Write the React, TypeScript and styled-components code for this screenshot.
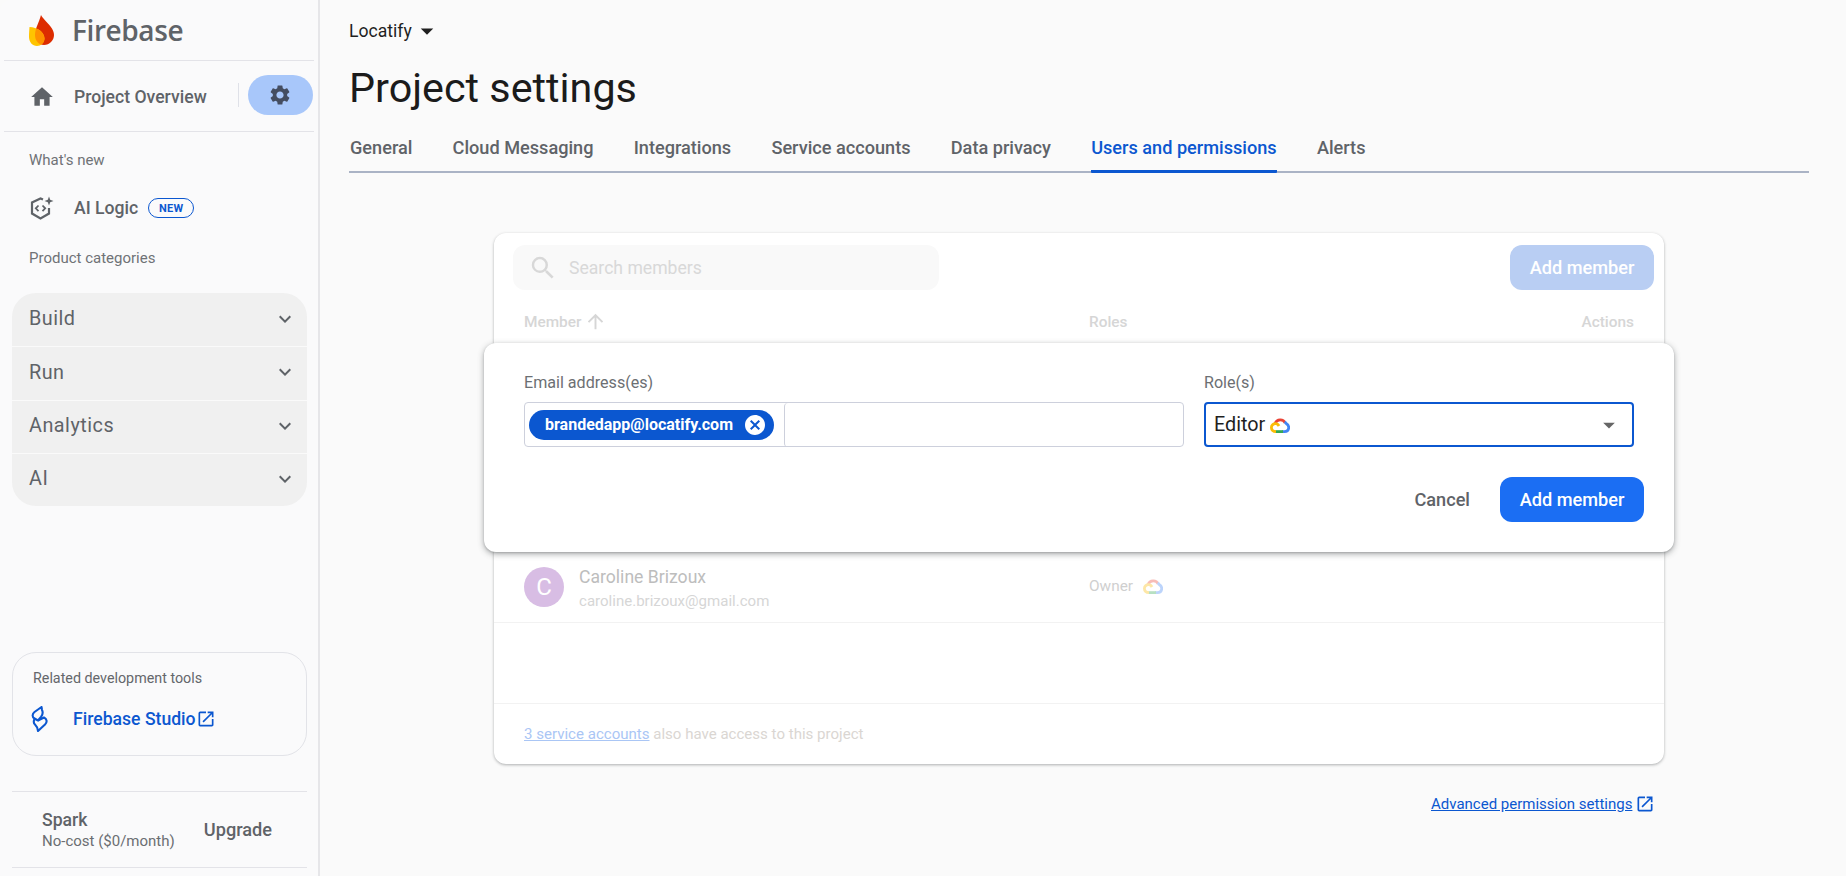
import React from "react";
import styled, { createGlobalStyle } from "styled-components";
import {
  MdHome,
  MdSettings,
  MdExpandMore,
  MdOpenInNew,
  MdSearch,
  MdArrowUpward,
  MdArrowDropDown,
  MdCancel,
} from "react-icons/md";

const GlobalStyle = createGlobalStyle`
  html, body {
    margin: 0;
    height: 100%;
    overflow: hidden;
    background: #fafafa;
    font-family: Roboto, "Liberation Sans", sans-serif;
  }
  * { box-sizing: border-box; }
`;

const Page = styled.div`
  display: flex;
  width: 1846px;
  height: 876px;
  overflow: hidden;
`;

const Sidebar = styled.aside`
  width: 320px;
  flex: none;
  height: 876px;
  display: flex;
  flex-direction: column;
  background: #fafafb;
  border-right: 2px solid #e6e6e9;
  border-top-left-radius: 12px;
  color: #5f6368;
`;

const BrandRow = styled.div`
  height: 61px;
  margin: 0 4px;
  padding-left: 25px;
  display: flex;
  align-items: center;
  gap: 18px;
  border-bottom: 1px solid #e3e3e8;
`;

const BrandName = styled.span`
  font-family: "Open Sans", Roboto, sans-serif;
  font-size: 28px;
  letter-spacing: -0.4px;
  color: #5f6368;
  font-weight: 600;
`;

const OverviewRow = styled.div`
  height: 71px;
  margin: 0 4px;
  padding: 0 0 2px 25px;
  display: flex;
  align-items: center;
  border-bottom: 1px solid #e3e3e8;
`;

const OverviewLink = styled.div`
  display: flex;
  align-items: center;
  padding-top: 3px;
`;

const NavLabel = styled.span`
  font-size: 17.6px;
  font-weight: 500;
  color: #5f6368;
`;

const IconSlot = styled.span`
  width: 45px;
  flex: none;
  display: flex;
  align-items: center;
  font-size: 26px;
  color: #5f6368;
`;

const VerticalRule = styled.span`
  width: 1px;
  height: 24px;
  background: #dfe1e8;
  margin-left: 31px;
`;

const GearPill = styled.span`
  width: 65px;
  height: 40px;
  margin-left: 9px;
  border-radius: 20px;
  background: #a8c7fa;
  color: #444d60;
  display: flex;
  align-items: center;
  justify-content: center;
  font-size: 24px;
`;

const SectionLabel = styled.div<{ $top: number }>`
  font-size: 15px;
  line-height: 18px;
  color: #6f7276;
  padding-left: 29px;
  margin-top: ${(p) => p.$top}px;
`;

const LogicRow = styled.div`
  height: 26px;
  margin-top: 26px;
  padding-left: 29px;
  display: flex;
  align-items: center;
`;

const NewBadge = styled.span`
  margin-left: 10px;
  width: 46px;
  height: 20px;
  border: 1.5px solid #0b57d0;
  border-radius: 10px;
  color: #0b57d0;
  font-size: 11px;
  font-weight: 700;
  letter-spacing: 0.3px;
  display: flex;
  align-items: center;
  justify-content: center;
`;

const Accordion = styled.div`
  margin: 26px 11px 0 12px;
  border-radius: 24px;
  overflow: hidden;
  background: #f0f0f0;
`;

const AccordionRow = styled.div`
  height: 53.25px;
  padding: 0 10px 2px 17px;
  display: flex;
  align-items: center;
  justify-content: space-between;
  font-size: 19.8px;
  letter-spacing: 0.5px;
  color: #5f6368;
  & + & {
    border-top: 1px solid #fafafa;
  }
  svg {
    font-size: 24px;
  }
`;

const Spacer = styled.div`
  flex: 1;
`;

const ToolsCard = styled.div`
  margin: 0 11px 0 12px;
  height: 104px;
  border: 1px solid #e2e3e8;
  border-radius: 24px;
  padding: 16px 0 0 20px;
`;

const ToolsTitle = styled.div`
  font-size: 14.3px;
  line-height: 18px;
  color: #64676b;
`;

const StudioRow = styled.div`
  display: flex;
  align-items: center;
  margin-top: 19px;
  margin-left: -2px;
  color: #0b57d0;
`;

const StudioName = styled.span`
  font-size: 17.6px;
  font-weight: 500;
  margin-left: 24px;
`;

const PlanRow = styled.div`
  margin: 35px 11px 8px 12px;
  height: 77px;
  border-top: 1px solid #e3e3e8;
  border-bottom: 1px solid #e3e3e8;
  padding-left: 30px;
  display: flex;
  align-items: center;
  justify-content: space-between;
  padding-right: 35px;
`;

const PlanName = styled.div`
  font-size: 17.6px;
  line-height: 22px;
  font-weight: 500;
  color: #5f6368;
`;

const PlanCost = styled.div`
  font-size: 15px;
  line-height: 20px;
  color: #6b6e72;
`;

const UpgradeLabel = styled.span`
  font-size: 18.15px;
  font-weight: 500;
  color: #5f6368;
`;

const Main = styled.main`
  flex: 1;
  padding: 0 37px 0 29px;
  background: #fafafa;
  display: flex;
  flex-direction: column;
`;

const ProjectPicker = styled.div`
  margin-top: 20px;
  height: 22px;
  display: flex;
  align-items: center;
  font-size: 17.6px;
  color: #1f1f1f;
  svg {
    font-size: 30px;
  }
`;

const Title = styled.h1`
  margin: 20px 0 0;
  font-family: Roboto, sans-serif;
  font-size: 41.3px;
  line-height: 52px;
  font-weight: 400;
  color: #1b1b1b;
`;

const Tabs = styled.nav`
  margin-top: 22px;
  height: 37px;
  display: flex;
  gap: 40.2px;
  padding-left: 1px;
  border-bottom: 2px solid #aab3c5;
`;

const Tab = styled.div<{ $active?: boolean }>`
  height: 37px;
  font-size: 18.15px;
  line-height: 24px;
  font-weight: 500;
  color: ${(p) => (p.$active ? "#0b57d0" : "#5f6368")};
  border-bottom: ${(p) => (p.$active ? "3px solid #0b57d0" : "none")};
  border-radius: 1px;
`;

const Card = styled.section`
  position: relative;
  align-self: flex-start;
  margin: 60px 0 0 145px;
  width: 1170px;
  height: 531px;
  background: #fff;
  border-radius: 12px;
  box-shadow: 0 1px 3px rgba(60, 64, 67, 0.4);
`;

const Toolbar = styled.div`
  display: flex;
  justify-content: space-between;
  padding: 12px 10px 0 19px;
`;

const SearchBox = styled.div`
  width: 426px;
  height: 45px;
  border-radius: 12px;
  background: #f9f9f9;
  padding-left: 15px;
  display: flex;
  align-items: center;
  gap: 11px;
  color: #d8d8d8;
  font-size: 17.6px;
  font-weight: 400;
  svg {
    font-size: 30px;
  }
`;

const PrimaryButton = styled.div<{ $muted?: boolean }>`
  width: 144px;
  height: 45px;
  border-radius: 12px;
  background: ${(p) => (p.$muted ? "#b9cef3" : "#1b6ef3")};
  color: #fff;
  font-size: 18.15px;
  font-weight: 500;
  display: flex;
  align-items: center;
  justify-content: center;
`;

const MemberGrid = styled.div`
  display: grid;
  grid-template-columns: 565px 1fr auto;
  padding: 0 30px 0 30px;
  align-items: center;
`;

const HeadRow = styled(MemberGrid)`
  height: 45px;
  margin-top: 9px;
  font-size: 15.4px;
  font-weight: 500;
  color: #d6d6d6;
`;

const SortLabel = styled.span`
  display: flex;
  align-items: center;
  gap: 3px;
  svg {
    font-size: 23px;
  }
`;

const HiddenRows = styled.div`
  height: 207px;
`;

const MemberRow = styled(MemberGrid)`
  height: 72px;
  border-bottom: 1px solid #f2f2f2;
`;

const MemberCell = styled.div`
  display: flex;
  align-items: center;
  gap: 15px;
`;

const Avatar = styled.div`
  width: 40px;
  height: 40px;
  border-radius: 50%;
  background: #d8bde4;
  color: #fff;
  display: flex;
  align-items: center;
  justify-content: center;
  font-size: 24px;
`;

const MemberText = styled.div`
  padding-top: 3px;
`;

const MemberName = styled.div`
  font-size: 17.6px;
  line-height: 24px;
  color: #bdbdbd;
`;

const MemberMail = styled.div`
  font-size: 15.05px;
  line-height: 20px;
  margin-top: 2px;
  color: #d6d6d6;
`;

const RoleCell = styled.div`
  display: flex;
  align-items: center;
  gap: 10px;
  font-size: 15.4px;
  color: #cfcfcf;
  padding-bottom: 2px;
`;

const BlankRow = styled.div`
  height: 81px;
  border-bottom: 1px solid #f2f2f2;
`;

const CardFooter = styled.div`
  padding: 20px 0 0 30px;
  font-size: 15.05px;
  line-height: 20px;
  color: #dad6d2;
  a {
    color: #aac6f5;
    text-decoration: underline;
  }
`;

const AddPanel = styled.div`
  position: absolute;
  left: -10px;
  top: 110px;
  width: 1190px;
  height: 209px;
  background: #fff;
  border-radius: 12px;
  box-shadow: 0 2px 6px rgba(60, 64, 67, 0.45), 0 1px 2px rgba(60, 64, 67, 0.2);
  padding: 29px 40px 0 40px;
`;

const FieldRow = styled.div`
  display: grid;
  grid-template-columns: 660px 430px;
  gap: 20px;
`;

const FieldLabel = styled.div`
  font-size: 16.1px;
  line-height: 22px;
  color: #6c6f73;
  margin-bottom: 8px;
`;

const EmailInput = styled.div`
  height: 45px;
  border: 1.5px solid #cdd0dc;
  border-radius: 4px;
  display: flex;
  align-items: center;
  padding-left: 4px;
`;

const Chip = styled.span`
  width: 245px;
  height: 30px;
  flex: none;
  border-radius: 15px;
  background: #0b57d0;
  color: #fff;
  font-size: 16px;
  font-weight: 700;
  padding: 0 7px 0 16px;
  display: flex;
  align-items: center;
  justify-content: space-between;
  svg {
    font-size: 24px;
  }
`;

const ChipInput = styled.span`
  flex: 1;
  height: 44px;
  margin-left: 10px;
  border-left: 1.5px solid #cdd0dc;
  border-radius: 4px;
`;

const RoleSelect = styled.div`
  height: 45px;
  border: 2px solid #0b57d0;
  border-radius: 4px;
  display: flex;
  align-items: center;
  gap: 5px;
  padding: 0 9px 0 8px;
  font-size: 19.8px;
  color: #1f1f1f;
  svg.arrow {
    margin-left: auto;
    font-size: 28px;
    color: #666;
  }
`;

const PanelActions = styled.div`
  display: flex;
  justify-content: flex-end;
  align-items: center;
  gap: 30px;
  margin: 30px -10px 0 0;
`;

const CancelButton = styled.span`
  font-size: 18.15px;
  font-weight: 500;
  color: #5f6368;
`;

const AdvancedLink = styled.div`
  align-self: flex-start;
  margin: 30px 0 0 1082px;
  display: flex;
  align-items: center;
  gap: 3px;
  font-size: 15px;
  color: #0b57d0;
  span {
    text-decoration: underline;
  }
  svg {
    font-size: 20px;
  }
`;

const redFlame = "M12 0C13.5 3 18 7 21.5 11.5C24 14.5 25 17.5 25 20C25 25.5 20.5 30 15 30C9.5 30 6 25.5 6 20C6 13 10 8 12 0Z";
const yellowFlame = "M0.5 12C8 12 15.5 17 15.5 23.5C15.5 27.5 12 31 8 31C3.5 31 0 27 0 22C0 18 0.3 15 0.5 12Z";

const FirebaseMark = () => (
  <svg width="25" height="31" viewBox="0 0 25 31" style={{ flex: "none" }}>
    <defs>
      <clipPath id="flame-overlap">
        <path d={yellowFlame} />
      </clipPath>
    </defs>
    <path d={redFlame} fill="#dd2c00" />
    <path d={yellowFlame} fill="#ffc400" />
    <path d={redFlame} fill="#ff9100" clipPath="url(#flame-overlap)" />
  </svg>
);

const AiLogicIcon = () => (
  <svg width="26" height="26" viewBox="0 0 26 26" fill="none" stroke="#5f6368" strokeWidth="2.2">
    <path d="M14 4.6L11.5 3.5L3 7.5V18.5L11.5 23.5L20 18.5V13" />
    <path d="M9.5 10.5L6.8 13.3L9.5 16.1M13.5 10.5L16.2 13.3L13.5 16.1" strokeWidth="1.8" />
    <path d="M20 1.5L21.2 4.8L24.5 6L21.2 7.2L20 10.5L18.8 7.2L15.5 6L18.8 4.8Z" fill="#5f6368" stroke="none" />
  </svg>
);

const StudioIcon = () => (
  <svg width="18" height="26" viewBox="0 0 18 26" fill="none" stroke="#0b57d0" strokeWidth="2.1" strokeLinejoin="round" style={{ flex: "none" }}>
    <path d="M10.5 1L3.5 6C1 8 1 11 3.5 12.5L7 14.5L10 11C11.5 9 12 6 11 4Z" />
    <path d="M7 14.5L13 11.5C16 13 16.5 16 14 18.5L7 25C7 22 5.5 20 4 18.5C2.5 17 2.5 15 3.5 13" />
  </svg>
);

const CloudLogo = ({ dim }: { dim?: boolean }) => (
  <svg width="20" height="16" viewBox="0 0 20 16" fill="none" strokeWidth="2.8" opacity={dim ? 0.35 : 1}>
    <path d="M5.2 6.4A5.4 5.4 0 0 1 15.2 6" stroke="#ea4335" />
    <path d="M14.7 4.8A5.4 5.4 0 0 1 16.2 6.5C18 7.5 18.8 9 18.7 10.6C18.6 12.8 17 14.5 14.4 14.6H12" stroke="#4285f4" />
    <path d="M13 14.6H5.4" stroke="#34a853" />
    <path d="M6 14.6C3 14.6 1.4 12.8 1.4 10.6C1.4 8.2 3.5 6.3 6 6.7C7.5 7 8.5 8 9 9" stroke="#fbbc05" />
  </svg>
);

const App = () => {
  const tabs = ["General", "Cloud Messaging", "Integrations", "Service accounts", "Data privacy", "Users and permissions", "Alerts"];
  return (
    <Page>
      <GlobalStyle />
      <Sidebar>
        <BrandRow>
          <FirebaseMark />
          <BrandName>Firebase</BrandName>
        </BrandRow>
        <OverviewRow>
          <OverviewLink>
            <IconSlot><MdHome /></IconSlot>
            <NavLabel>Project Overview</NavLabel>
          </OverviewLink>
          <VerticalRule />
          <GearPill><MdSettings /></GearPill>
        </OverviewRow>
        <SectionLabel $top={19}>What's new</SectionLabel>
        <LogicRow>
          <IconSlot><AiLogicIcon /></IconSlot>
          <NavLabel>AI Logic</NavLabel>
          <NewBadge>NEW</NewBadge>
        </LogicRow>
        <SectionLabel $top={28}>Product categories</SectionLabel>
        <Accordion>
          {["Build", "Run", "Analytics", "AI"].map((name) => (
            <AccordionRow key={name}>
              {name}
              <MdExpandMore />
            </AccordionRow>
          ))}
        </Accordion>
        <Spacer />
        <ToolsCard>
          <ToolsTitle>Related development tools</ToolsTitle>
          <StudioRow>
            <StudioIcon />
            <StudioName>Firebase Studio</StudioName>
            <MdOpenInNew size={20} />
          </StudioRow>
        </ToolsCard>
        <PlanRow>
          <div>
            <PlanName>Spark</PlanName>
            <PlanCost>No-cost ($0/month)</PlanCost>
          </div>
          <UpgradeLabel>Upgrade</UpgradeLabel>
        </PlanRow>
      </Sidebar>
      <Main>
        <ProjectPicker>
          Locatify
          <MdArrowDropDown />
        </ProjectPicker>
        <Title>Project settings</Title>
        <Tabs>
          {tabs.map((t) => (
            <Tab key={t} $active={t === "Users and permissions"}>{t}</Tab>
          ))}
        </Tabs>
        <Card>
          <Toolbar>
            <SearchBox>
              <MdSearch />
              Search members
            </SearchBox>
            <PrimaryButton $muted>Add member</PrimaryButton>
          </Toolbar>
          <HeadRow>
            <SortLabel>Member <MdArrowUpward /></SortLabel>
            <span>Roles</span>
            <span>Actions</span>
          </HeadRow>
          <HiddenRows />
          <MemberRow>
            <MemberCell>
              <Avatar>C</Avatar>
              <MemberText>
                <MemberName>Caroline Brizoux</MemberName>
                <MemberMail>caroline.brizoux@gmail.com</MemberMail>
              </MemberText>
            </MemberCell>
            <RoleCell>Owner <CloudLogo dim /></RoleCell>
          </MemberRow>
          <BlankRow />
          <CardFooter>
            <a>3 service accounts</a> also have access to this project
          </CardFooter>
          <AddPanel>
            <FieldRow>
              <div>
                <FieldLabel>Email address(es)</FieldLabel>
                <EmailInput>
                  <Chip>
                    brandedapp@locatify.com
                    <MdCancel />
                  </Chip>
                  <ChipInput />
                </EmailInput>
              </div>
              <div>
                <FieldLabel>Role(s)</FieldLabel>
                <RoleSelect>
                  Editor <CloudLogo />
                  <MdArrowDropDown className="arrow" />
                </RoleSelect>
              </div>
            </FieldRow>
            <PanelActions>
              <CancelButton>Cancel</CancelButton>
              <PrimaryButton>Add member</PrimaryButton>
            </PanelActions>
          </AddPanel>
        </Card>
        <AdvancedLink>
          <span>Advanced permission settings</span>
          <MdOpenInNew />
        </AdvancedLink>
      </Main>
    </Page>
  );
};

export default App;
